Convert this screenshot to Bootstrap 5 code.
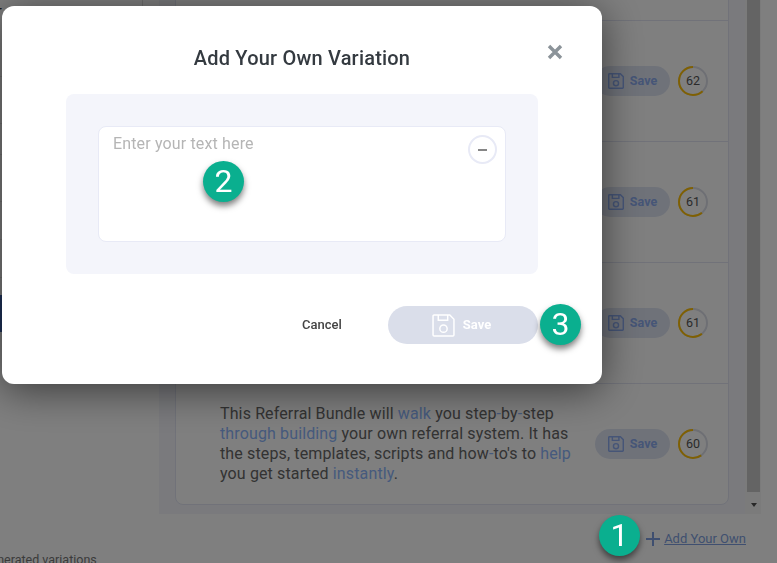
<!DOCTYPE html>
<html lang="en">
<head>
<meta charset="utf-8">
<title>Add Your Own Variation</title>
<link href="https://cdn.jsdelivr.net/npm/bootstrap@5.3.0/dist/css/bootstrap.min.css" rel="stylesheet">
<style>
html,body{height:100%;overflow:hidden}
body{font-family:Roboto,"Liberation Sans",sans-serif;color:#666;background:#fff}
.page-top{height:514px}
.side-col{width:159px;flex:none;overflow:hidden}
.side-line{border-bottom:1px solid #e6e6e6}
.side-cta{height:37px;background:#3f66b5;margin-left:-20px;width:22px;margin-top:17px}
.side-head{height:38px;font-size:14px;line-height:22px;color:#222;margin-left:-3px;border-right:1px solid #ddd;width:146px}
.panel-wrap{width:586px;flex:none;background:#f4f5fb;padding:0 16px 9px;justify-content:flex-end;overflow:hidden}
.var-card{background:#fff;border:1px solid #e2e5f3;border-radius:0 0 8px 8px;flex:none}
.var-row{height:121px;border-bottom:1px solid #e2e5f3;padding:0 20px 0 44px}
.var-row:last-child{border-bottom:0;height:120px}
.var-text{font-size:16px;line-height:20px;width:356px;margin:0;letter-spacing:.13px}
.var-text span{color:#8cb4fa}
.save-pill{width:75px;height:30px;border-radius:15px;background:#dfe5f3;color:#8cabef;font-size:12.5px;font-weight:700;border:0;padding:0;gap:6px;flex:none}
.ring{width:30px;height:30px;font-size:12.5px;color:#555;margin-left:8px}
.ring svg{position:absolute;inset:0}
.ring-box{position:relative}
.scroll-rail{width:16px;flex:none;background:#f7f7f7;padding:0 1px 0 2px}
.scroll-thumb{background:#c9c9c9;flex:1}
.scroll-tip{height:22px;padding-top:11px}
.scroll-tip i{display:block;margin:0 auto;width:0;height:0;border-left:3.5px solid transparent;border-right:3.5px solid transparent;border-top:4px solid #505050}
.foot-row{height:49px;padding-right:31px}
.foot-note{font-size:12.5px;color:#777;margin-left:-18px;margin-top:auto;line-height:14px;margin-bottom:-4px}
.foot-add{margin-top:1px;gap:3px}
.add-link{font-size:13px;color:#7f9fe0;text-decoration:underline}
.modal-backdrop.show{opacity:.5}
.dlg{width:600px;max-width:none;margin:6px 0 0 2px}
.dlg-box{height:378px;border:0;border-radius:12px;box-shadow:0 6px 40px rgba(0,0,0,.55);overflow:visible;position:relative}
.dlg-title{font-size:20px;font-weight:500;color:#343a40;line-height:24px;letter-spacing:.2px;padding-top:40px;height:88px}
.dlg-close{position:absolute;top:36px;right:37px;width:20px;height:20px;border:0;background:none;padding:0;display:block}
.dlg-close svg{display:block}
.dlg-pad{background:#f4f5fb;border-radius:8px;width:472px;height:180px;margin-left:64px;padding:32px}
.dlg-field{position:relative;height:116px;width:408px;background:#fff;border:1px solid #e8eaf6;border-radius:8px}
.dlg-field textarea{width:100%;height:100%;border:0;background:none;resize:none;outline:0;padding:5px 40px 0 14px;font-size:16px;line-height:24px;display:block;letter-spacing:.15px}
.dlg-field textarea::placeholder{color:#b5b5b5;opacity:1}
.dlg-minus{position:absolute;top:8px;right:8px;width:29px;height:29px;border-radius:50%;border:2px solid #e8eaf6;background:#fff;padding:0}
.dlg-foot{margin-top:32px;padding-right:64px;gap:46px}
.dlg-cancel{font-size:13px;font-weight:500;color:#444;background:none;border:0;padding:0;width:40px}
.dlg-save,.dlg-save:disabled{width:150px;height:38px;border-radius:19px;background:#dadeea;border:0;color:#fff;font-size:13px;font-weight:700;gap:8px;opacity:1;padding:0 3px 0 0}
.step-dot{position:absolute;width:41px;height:41px;border-radius:50%;background:#0aaf8f;color:#fff;font-size:32px;line-height:41px;text-align:center;box-shadow:0 4px 6px rgba(0,0,0,.5)}
.step-two{left:201px;top:155px}
.step-three{left:538px;top:298px}
.step-one{left:599px;top:515px;z-index:1060}
</style>
</head>
<body>
<div class="d-flex page-top">
  <div class="side-col">
    <div class="side-head">r</div>
    <div class="side-line" style="height:39px"></div>
    <div class="side-line" style="height:47px"></div>
    <div class="side-line" style="height:31px"></div>
    <div class="side-line" style="height:47px"></div>
    <div class="side-line" style="height:38px"></div>
    <div class="side-line" style="height:38px"></div>
    <div class="side-cta"></div>
  </div>
  <div class="panel-wrap d-flex flex-column">
    <div class="var-card">
      <div class="var-row d-flex align-items-center justify-content-end"><button class="save-pill d-inline-flex align-items-center justify-content-center" type="button"><svg width="16" height="16" viewBox="0 0 22 22" fill="none" stroke="currentColor" stroke-width="2"><path d="M2 1h15l4 4v15a1 1 0 0 1-1 1H2a1 1 0 0 1-1-1V2a1 1 0 0 1 1-1z"/><path d="M6 1v5h9V1"/><circle cx="11" cy="14" r="3.5"/></svg>Save</button><div class="ring ring-box d-flex align-items-center justify-content-center"><svg viewBox="0 0 30 30"><circle cx="15" cy="15" r="14" fill="none" stroke="#dcdfe8" stroke-width="2"/><circle cx="15" cy="15" r="14" fill="none" stroke="#ffc107" stroke-width="2" pathLength="100" stroke-dasharray="63 100" transform="translate(30 0) scale(-1 1) rotate(-90 15 15)"/></svg>63</div></div>
      <div class="var-row d-flex align-items-center justify-content-end"><button class="save-pill d-inline-flex align-items-center justify-content-center" type="button"><svg width="16" height="16" viewBox="0 0 22 22" fill="none" stroke="currentColor" stroke-width="2"><path d="M2 1h15l4 4v15a1 1 0 0 1-1 1H2a1 1 0 0 1-1-1V2a1 1 0 0 1 1-1z"/><path d="M6 1v5h9V1"/><circle cx="11" cy="14" r="3.5"/></svg>Save</button><div class="ring ring-box d-flex align-items-center justify-content-center"><svg viewBox="0 0 30 30"><circle cx="15" cy="15" r="14" fill="none" stroke="#dcdfe8" stroke-width="2"/><circle cx="15" cy="15" r="14" fill="none" stroke="#ffc107" stroke-width="2" pathLength="100" stroke-dasharray="62 100" transform="translate(30 0) scale(-1 1) rotate(-90 15 15)"/></svg>62</div></div>
      <div class="var-row d-flex align-items-center justify-content-end"><button class="save-pill d-inline-flex align-items-center justify-content-center" type="button"><svg width="16" height="16" viewBox="0 0 22 22" fill="none" stroke="currentColor" stroke-width="2"><path d="M2 1h15l4 4v15a1 1 0 0 1-1 1H2a1 1 0 0 1-1-1V2a1 1 0 0 1 1-1z"/><path d="M6 1v5h9V1"/><circle cx="11" cy="14" r="3.5"/></svg>Save</button><div class="ring ring-box d-flex align-items-center justify-content-center"><svg viewBox="0 0 30 30"><circle cx="15" cy="15" r="14" fill="none" stroke="#dcdfe8" stroke-width="2"/><circle cx="15" cy="15" r="14" fill="none" stroke="#ffc107" stroke-width="2" pathLength="100" stroke-dasharray="61 100" transform="translate(30 0) scale(-1 1) rotate(-90 15 15)"/></svg>61</div></div>
      <div class="var-row d-flex align-items-center justify-content-end"><button class="save-pill d-inline-flex align-items-center justify-content-center" type="button"><svg width="16" height="16" viewBox="0 0 22 22" fill="none" stroke="currentColor" stroke-width="2"><path d="M2 1h15l4 4v15a1 1 0 0 1-1 1H2a1 1 0 0 1-1-1V2a1 1 0 0 1 1-1z"/><path d="M6 1v5h9V1"/><circle cx="11" cy="14" r="3.5"/></svg>Save</button><div class="ring ring-box d-flex align-items-center justify-content-center"><svg viewBox="0 0 30 30"><circle cx="15" cy="15" r="14" fill="none" stroke="#dcdfe8" stroke-width="2"/><circle cx="15" cy="15" r="14" fill="none" stroke="#ffc107" stroke-width="2" pathLength="100" stroke-dasharray="61 100" transform="translate(30 0) scale(-1 1) rotate(-90 15 15)"/></svg>61</div></div>
      <div class="var-row d-flex align-items-center justify-content-between">
        <p class="var-text">This Referral Bundle will <span>walk</span> you step<span>-</span>by<span>-</span>step <span>through building</span> your own referral system. It has the steps, templates, scripts and how<span>-</span>to's to <span>help</span> you get started <span>instantly</span>.</p>
        <div class="d-flex align-items-center"><button class="save-pill d-inline-flex align-items-center justify-content-center" type="button"><svg width="16" height="16" viewBox="0 0 22 22" fill="none" stroke="currentColor" stroke-width="2"><path d="M2 1h15l4 4v15a1 1 0 0 1-1 1H2a1 1 0 0 1-1-1V2a1 1 0 0 1 1-1z"/><path d="M6 1v5h9V1"/><circle cx="11" cy="14" r="3.5"/></svg>Save</button><div class="ring ring-box d-flex align-items-center justify-content-center"><svg viewBox="0 0 30 30"><circle cx="15" cy="15" r="14" fill="none" stroke="#dcdfe8" stroke-width="2"/><circle cx="15" cy="15" r="14" fill="none" stroke="#ffc107" stroke-width="2" pathLength="100" stroke-dasharray="60 100" transform="translate(30 0) scale(-1 1) rotate(-90 15 15)"/></svg>60</div></div>
      </div>
    </div>
  </div>
  <div class="scroll-rail d-flex flex-column">
    <div class="scroll-thumb"></div>
    <div class="scroll-tip"><i></i></div>
  </div>
</div>
<div class="d-flex foot-row align-items-center justify-content-between">
  <div class="foot-note">Generated variations</div>
  <div class="d-flex align-items-center foot-add">
    <svg width="16" height="16" viewBox="0 0 16 16" fill="none" stroke="#7f9fe0" stroke-width="2"><path d="M8 1v14M1 8h14"/></svg>
    <a class="add-link" href="#">Add Your Own</a>
  </div>
</div>
<div class="modal-backdrop show"></div>
<div class="modal d-block" tabindex="-1">
  <div class="modal-dialog dlg">
    <div class="modal-content dlg-box">
      <h5 class="dlg-title text-center m-0">Add Your Own Variation</h5>
      <button class="dlg-close" type="button" aria-label="Close"><svg width="20" height="20" viewBox="0 0 20 20" fill="none" stroke="#8b9399" stroke-width="3.4"><path d="M4 4l12 12M16 4L4 16"/></svg></button>
      <div class="dlg-pad">
        <div class="dlg-field">
          <textarea placeholder="Enter your text here"></textarea>
          <button class="dlg-minus d-flex align-items-center justify-content-center" type="button" aria-label="Remove"><svg width="9" height="2" viewBox="0 0 9 2"><path d="M0 1h9" stroke="#444" stroke-width="1.3"/></svg></button>
        </div>
      </div>
      <div class="dlg-foot d-flex align-items-center justify-content-end">
        <button class="dlg-cancel" type="button">Cancel</button>
        <button class="btn dlg-save d-flex align-items-center justify-content-center" type="button" disabled><svg width="23" height="23" viewBox="0 0 22 22" fill="none" stroke="#fff" stroke-width="1.4"><path d="M2 1h15l4 4v15a1 1 0 0 1-1 1H2a1 1 0 0 1-1-1V2a1 1 0 0 1 1-1z"/><path d="M6 1v5h9V1"/><circle cx="11" cy="14" r="3.5"/></svg>Save</button>
      </div>
      <div class="step-dot step-two">2</div>
      <div class="step-dot step-three">3</div>
    </div>
  </div>
</div>
<div class="step-dot step-one">1</div>
<script src="https://cdn.jsdelivr.net/npm/bootstrap@5.3.0/dist/js/bootstrap.bundle.min.js"></script>
</body>
</html>
